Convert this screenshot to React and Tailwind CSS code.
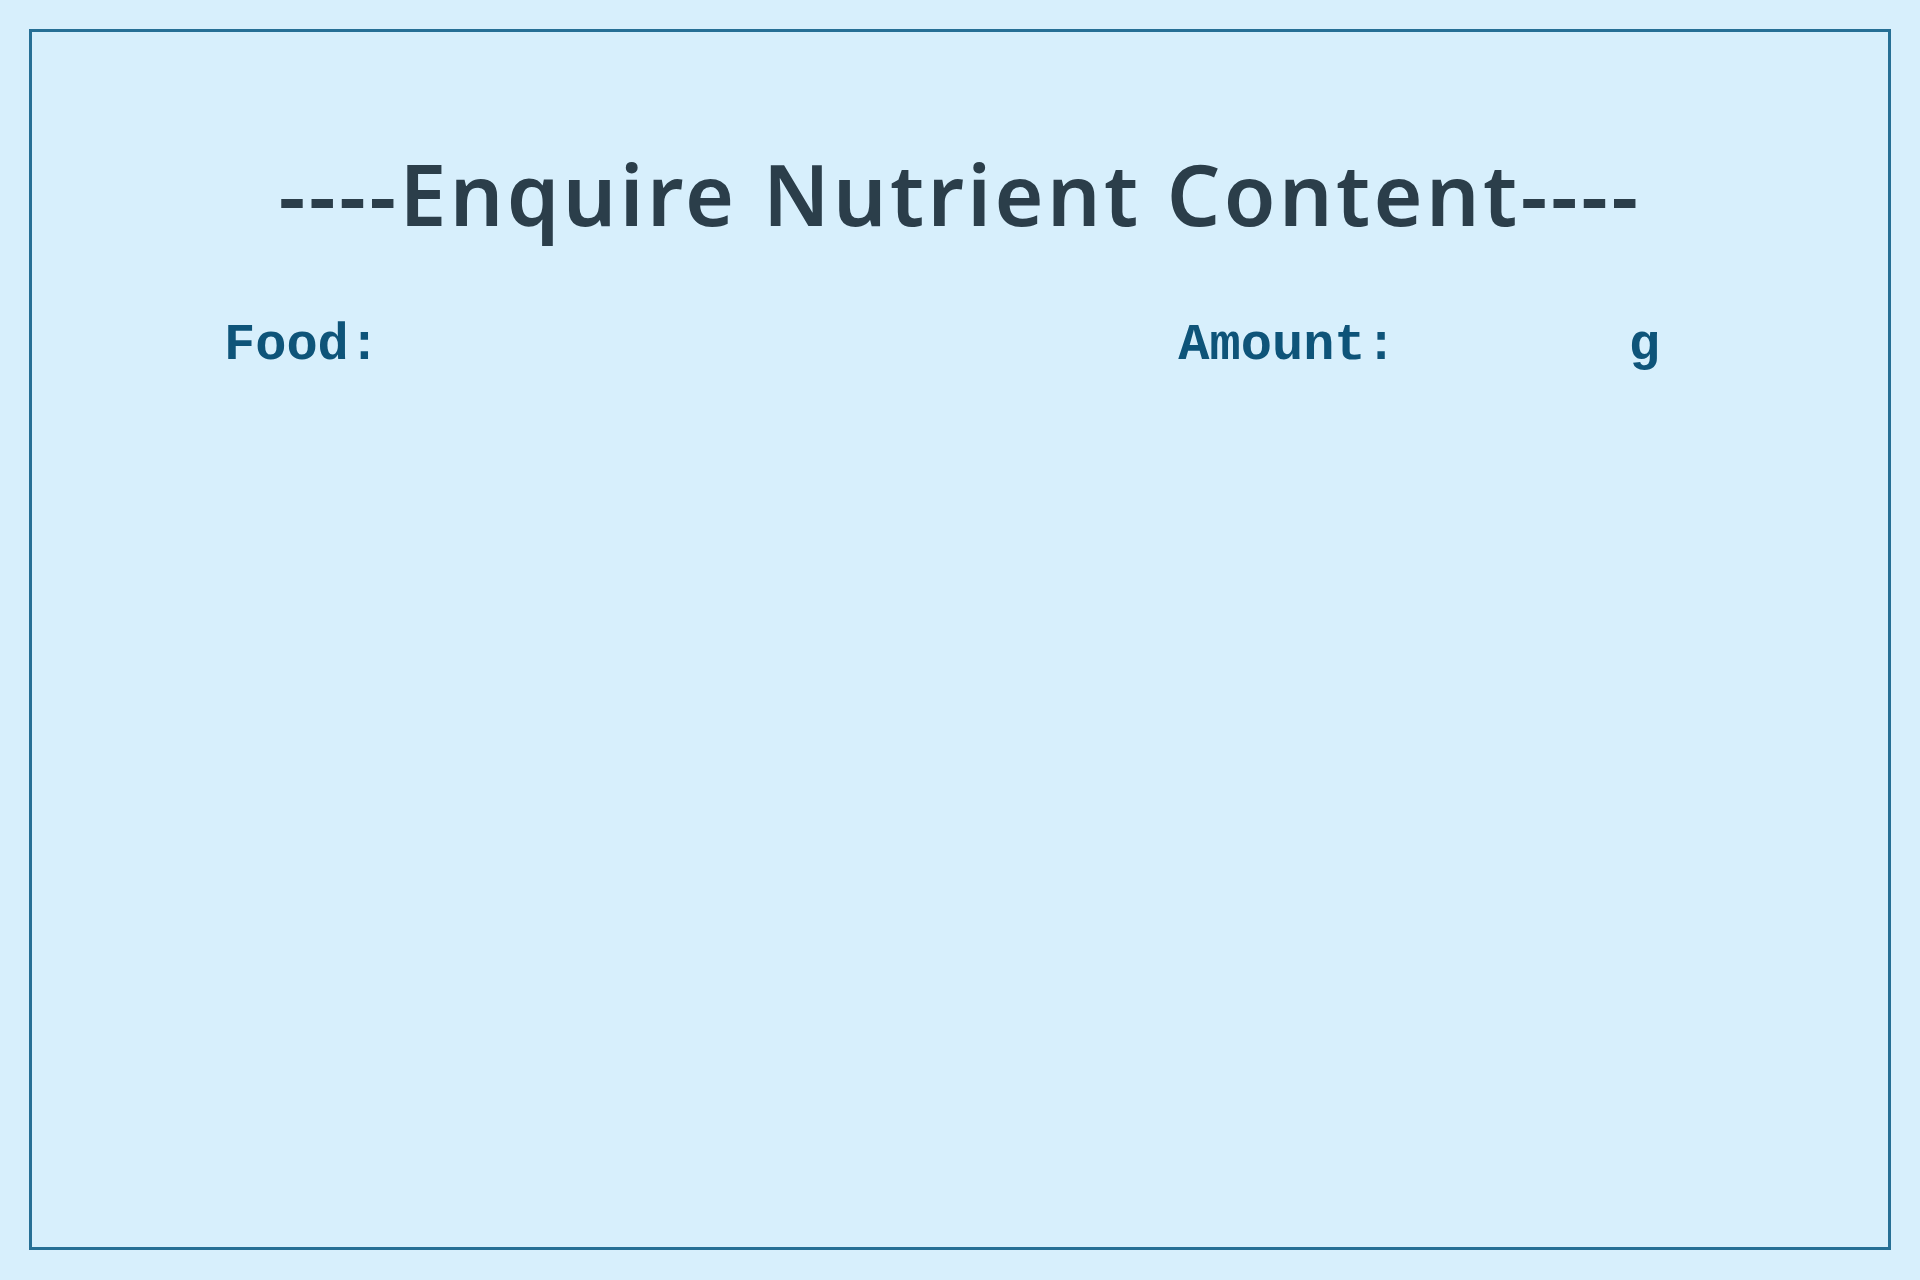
export default function App() {
  return (
    <div className="h-screen overflow-hidden bg-[#d7effc] p-[29px]">
      <div className="h-[1221px] border-[3px] border-[#266f95] bg-[#d7effc] flex flex-col">
        <h1
          className="mt-[114px] text-center text-[84px] leading-[96px] font-semibold tracking-[3.4px] text-[#2b3e4a]"
          style={{ fontFamily: '"Comic Sans MS", "Noto Sans", sans-serif' }}
        >
          ----Enquire Nutrient Content----
        </h1>
        <div
          className="mt-[65px] flex items-center text-[52px] font-bold text-[#0e5479]"
          style={{ fontFamily: '"Courier New", "Nimbus Mono PS", "FreeMono", "Liberation Mono", monospace' }}
        >
          <label className="ml-[192px]">Food:</label>
          <input className="w-[600px] bg-transparent outline-none" />
          <label className="ml-auto">Amount:</label>
          <input className="w-[232px] bg-transparent outline-none" />
          <span className="mr-[228px]">g</span>
        </div>
      </div>
    </div>
  );
}
